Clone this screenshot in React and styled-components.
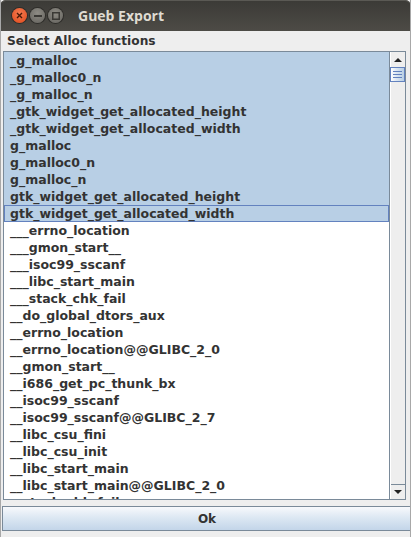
import styled, { createGlobalStyle } from 'styled-components';

const GlobalStyle = createGlobalStyle`
  html, body {
    margin: 0;
    padding: 0;
    background: #ffffff;
  }
`;

const selected = [
  '_g_malloc',
  '_g_malloc0_n',
  '_g_malloc_n',
  '_gtk_widget_get_allocated_height',
  '_gtk_widget_get_allocated_width',
  'g_malloc',
  'g_malloc0_n',
  'g_malloc_n',
  'gtk_widget_get_allocated_height',
  'gtk_widget_get_allocated_width',
];

const others = [
  '___errno_location',
  '___gmon_start__',
  '___isoc99_sscanf',
  '___libc_start_main',
  '___stack_chk_fail',
  '__do_global_dtors_aux',
  '__errno_location',
  '__errno_location@@GLIBC_2_0',
  '__gmon_start__',
  '__i686_get_pc_thunk_bx',
  '__isoc99_sscanf',
  '__isoc99_sscanf@@GLIBC_2_7',
  '__libc_csu_fini',
  '__libc_csu_init',
  '__libc_start_main',
  '__libc_start_main@@GLIBC_2_0',
  '__stack_chk_fail',
];

// 視窗
const Window = styled.div`
  width: 411px;
  height: 537px;
  display: flex;
  flex-direction: column;
  background: #eeeeee;
  box-sizing: border-box;
  border-left: 1px solid #a8a8a8;
  border-right: 1px solid #a8a8a8;
  overflow: hidden;
  font-family: 'DejaVu Sans', 'Liberation Sans', sans-serif;
  color: #333333;
`;

const TitleBar = styled.div`
  height: 31px;
  flex: none;
  display: flex;
  align-items: center;
  padding-left: 12px;
  margin: 0 -1px;
  border-radius: 6px 6px 0 0;
  background: linear-gradient(#3b3a36, #4d4b46);
  box-shadow: inset 0 1px 0 #5a5954;
`;

const Controls = styled.div`
  display: flex;
  gap: 3px;
  margin-right: 15px;
`;

const WinButton = styled.div`
  width: 15px;
  height: 15px;
  border-radius: 50%;
  display: flex;
  align-items: center;
  justify-content: center;
  background: ${p => (p.$close ? 'radial-gradient(circle at 50% 35%, #f47a50, #e0491a)' : 'radial-gradient(circle at 50% 35%, #8d8b84, #64625d)')};
  box-shadow: 0 0 0 1px #2e2d2a;
  svg {
    display: block;
  }
`;

const Title = styled.span`
  font-family: 'Open Sans', 'DejaVu Sans', sans-serif;
  font-size: 14px;
  font-weight: bold;
  color: #dfdbd2;
`;

const Label = styled.div`
  height: 20px;
  flex: none;
  display: flex;
  align-items: center;
  padding-left: 6px;
  font-size: 12.2px;
  font-weight: bold;
`;

// 列表
const ScrollPane = styled.div`
  height: 449px;
  flex: none;
  margin: 0 4px 0 2px;
  border: 1px solid #7a8a99;
  box-sizing: border-box;
  display: flex;
  background: #ffffff;
`;

const List = styled.div`
  flex: 1;
  overflow: hidden;
  border-right: 1px solid #7a8a99;
`;

const Row = styled.div`
  height: 17px;
  box-sizing: border-box;
  display: flex;
  align-items: center;
  padding-left: 5px;
  font-size: 12.5px;
  font-weight: bold;
  white-space: nowrap;
  background: ${p => (p.$selected ? '#b8cfe5' : '#ffffff')};
  border: 1px solid ${p => (p.$focus ? '#6382bf' : 'transparent')};
`;

const ScrollBar = styled.div`
  width: 15px;
  flex: none;
  display: flex;
  flex-direction: column;
  background: #eeeeee;
  border-left: 1px solid #ffffff;
  box-sizing: border-box;
`;

const ArrowButton = styled.div`
  height: 15px;
  flex: none;
  display: flex;
  align-items: center;
  justify-content: center;
  background: #eeeeee;
  box-sizing: border-box;
  border-top: ${p => (p.$down ? '1px solid #7a8a99' : 'none')};
  &::after {
    content: '';
    border-left: 4px solid transparent;
    border-right: 4px solid transparent;
    ${p => (p.$down ? 'border-top: 4px solid #222;' : 'border-bottom: 4px solid #222;')}
  }
`;

const Thumb = styled.div`
  height: 15px;
  flex: none;
  box-sizing: border-box;
  border: 1px solid #6382bf;
  margin-left: -1px;
  background: linear-gradient(90deg, #ffffff, #dde8f3 40%, #b8cfe5);
  display: flex;
  align-items: center;
  justify-content: center;
`;

const Track = styled.div`
  flex: 1;
`;

// 按鈕
const Footer = styled.div`
  flex: none;
  padding: 6px 0 0 1px;
  margin-right: -2px;
`;

const OkButton = styled.div`
  height: 25px;
  box-sizing: border-box;
  border: 1px solid #7a8a99;
  background: linear-gradient(#f7f9fc, #dde8f3 45%, #c3d5e9);
  display: flex;
  align-items: center;
  justify-content: center;
  font-size: 12px;
  font-weight: bold;
  color: #333333;
`;

const App = () => {
  return (
    <>
      <GlobalStyle />
      <Window>
        <TitleBar>
          <Controls>
            <WinButton $close>
              <svg width="7" height="7" viewBox="0 0 7 7">
                <path d="M1 1L6 6M6 1L1 6" stroke="#4a1a08" strokeWidth="1.4" />
              </svg>
            </WinButton>
            <WinButton>
              <svg width="8" height="2" viewBox="0 0 8 2">
                <rect width="8" height="2" fill="#3a3935" />
              </svg>
            </WinButton>
            <WinButton>
              <svg width="8" height="8" viewBox="0 0 8 8">
                <rect x="0.75" y="0.75" width="6.5" height="6.5" fill="none" stroke="#3a3935" strokeWidth="1.5" />
              </svg>
            </WinButton>
          </Controls>
          <Title>Gueb Export</Title>
        </TitleBar>
        <Label>Select Alloc functions</Label>
        <ScrollPane>
          <List>
            {selected.map((name, i) => (
              <Row key={name} $selected $focus={i === selected.length - 1}>
                {name}
              </Row>
            ))}
            {others.map(name => (
              <Row key={name}>{name}</Row>
            ))}
          </List>
          <ScrollBar>
            <ArrowButton />
            <Thumb>
              <svg width="9" height="7" viewBox="0 0 9 7">
                <path d="M0 0.5H9M0 3.5H9M0 6.5H9" stroke="#6382bf" strokeWidth="1" />
              </svg>
            </Thumb>
            <Track />
            <ArrowButton $down />
          </ScrollBar>
        </ScrollPane>
        <Footer>
          <OkButton>Ok</OkButton>
        </Footer>
      </Window>
    </>
  );
};

export default App;
